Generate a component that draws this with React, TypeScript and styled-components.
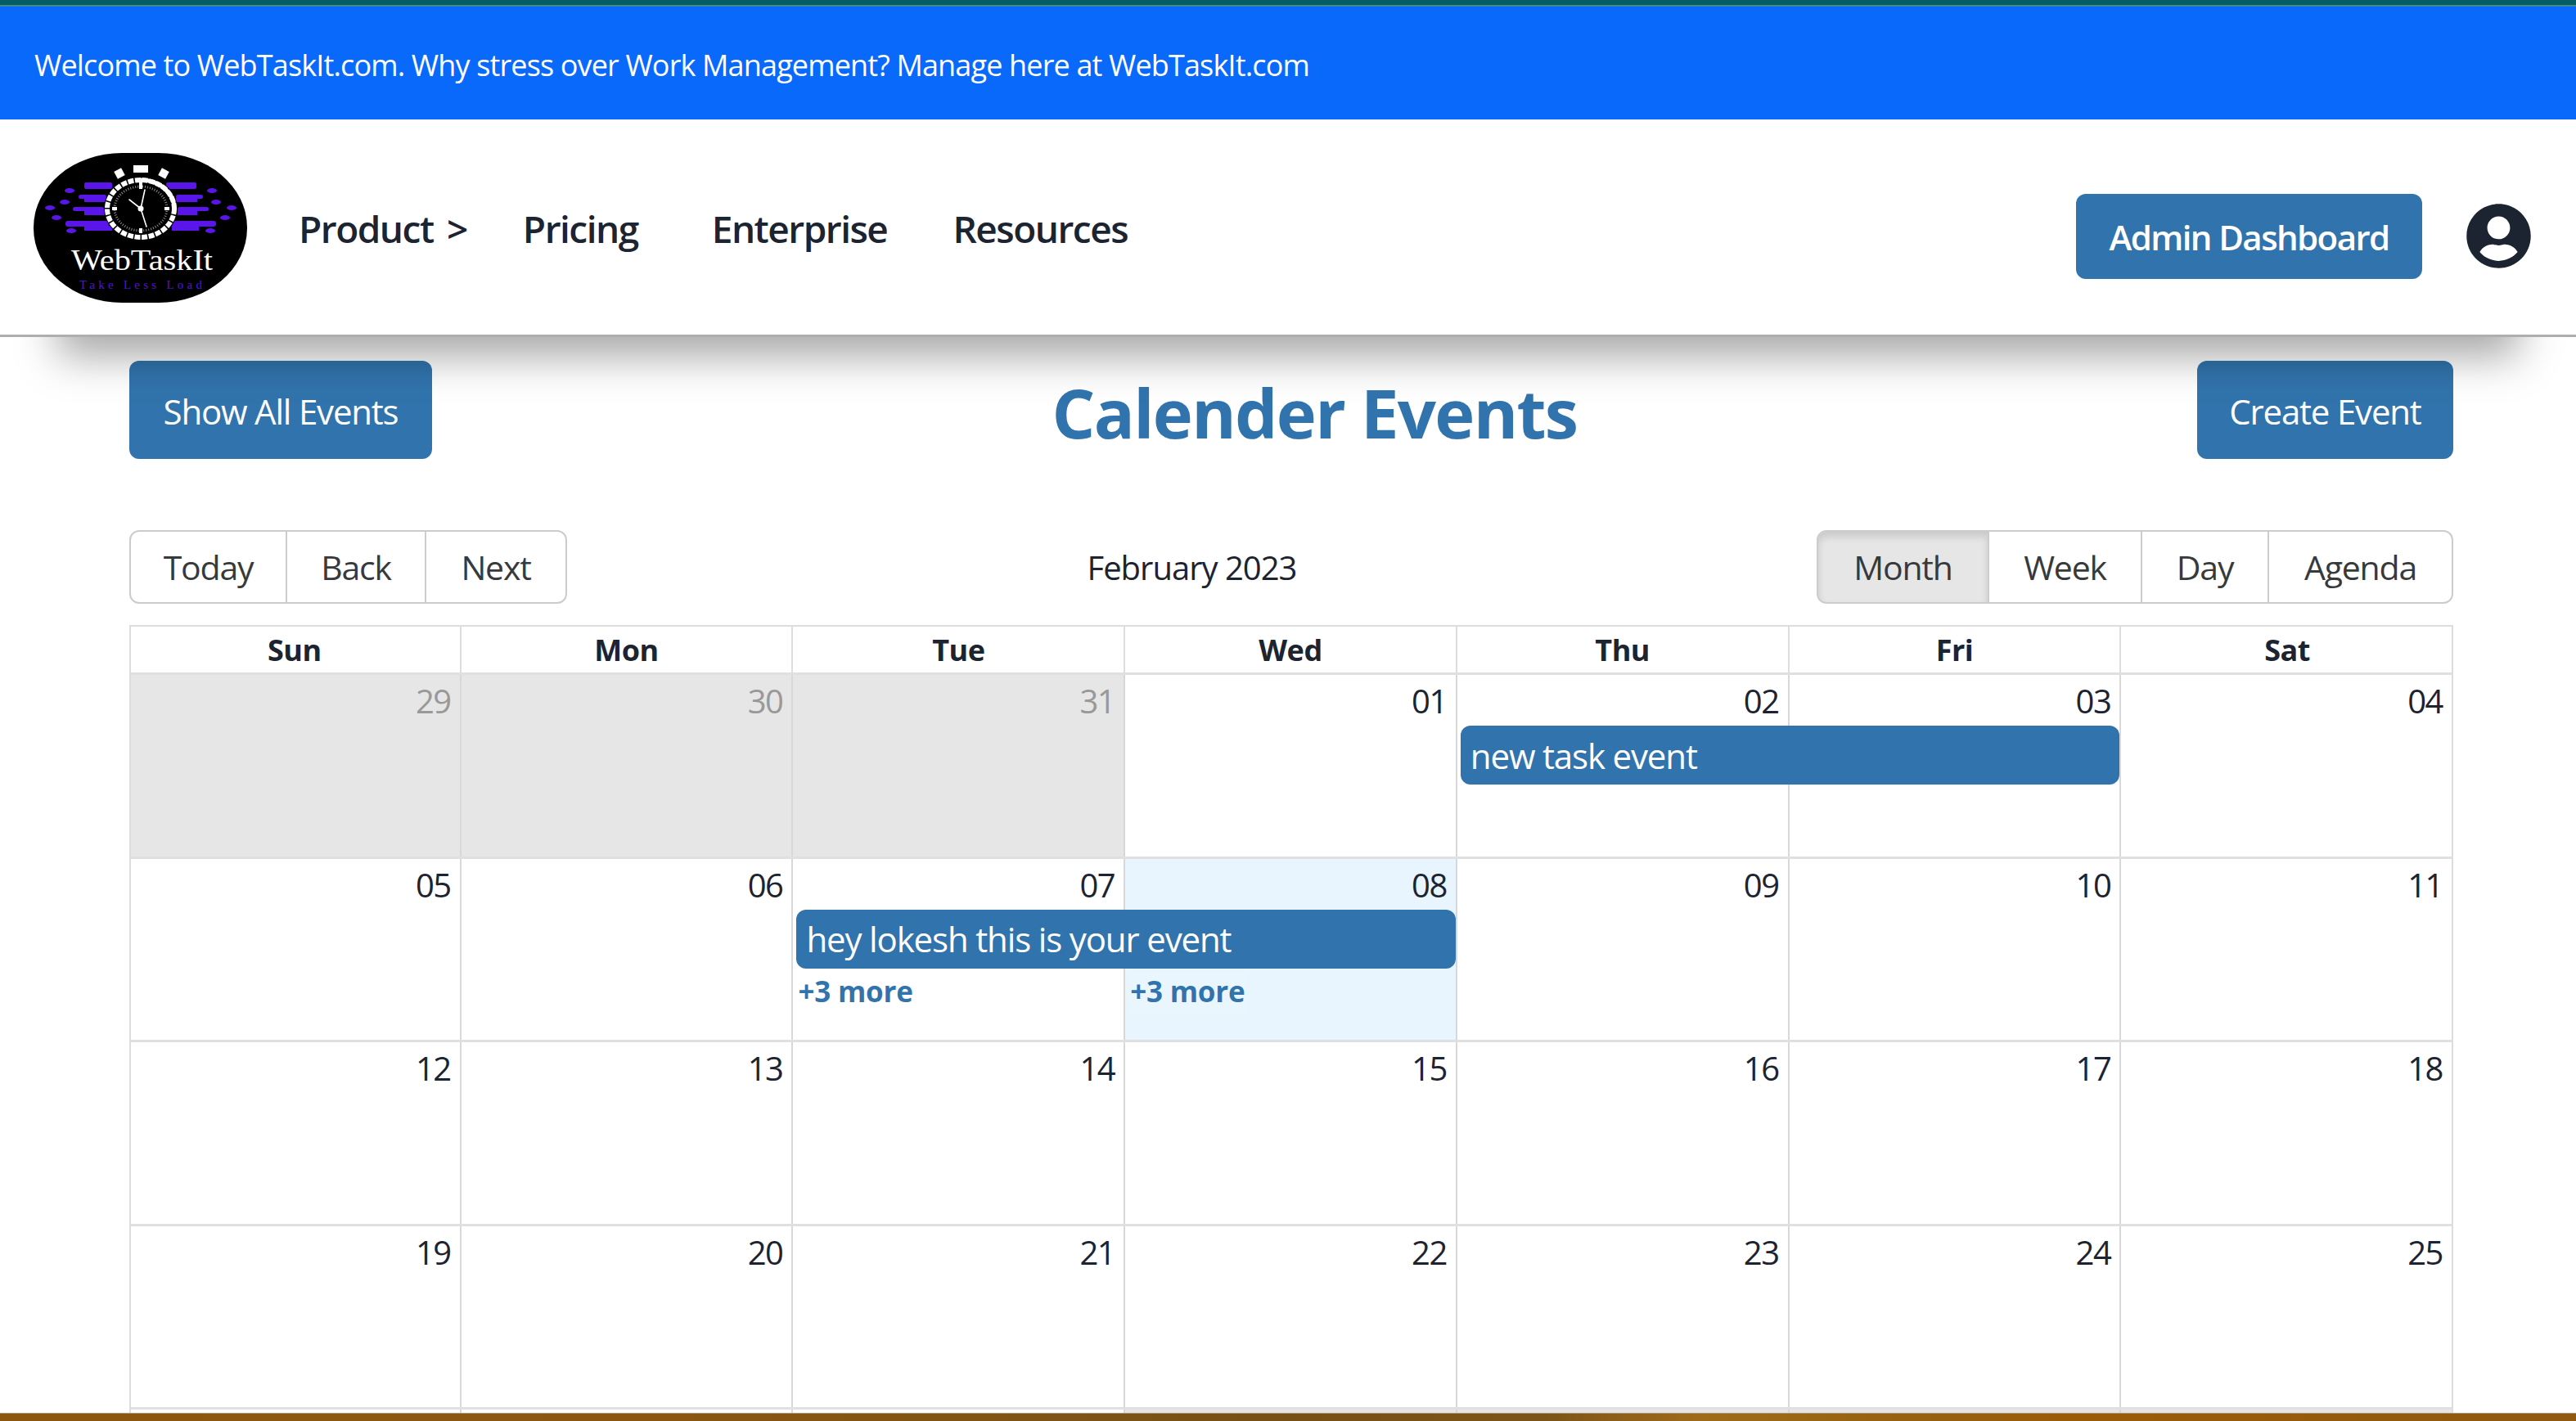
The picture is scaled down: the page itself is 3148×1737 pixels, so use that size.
import React from 'react';
import { FaUserCircle } from 'react-icons/fa';
import styled, { createGlobalStyle } from 'styled-components';

const GlobalStyle = createGlobalStyle`
  html, body { margin: 0; padding: 0; background: #fff; }
  body { font-family: "Open Sans", "Noto Sans", sans-serif; color: #1c2331; height: 1737px; overflow: hidden; }
  * { box-sizing: border-box; }
`;

const Page = styled.div`
  position: relative;
  height: 1737px;
  overflow: hidden;
`;

const TopBar = styled.header`
  position: relative;
  z-index: 2;
  background: #fff;
  box-shadow: 0 94px 48px -70px rgba(0, 0, 0, 0.34);
`;

const BrowserStrip = styled.div`
  height: 8px;
  background: #055e63;
  border-bottom: 2px solid #3f8a8e;
`;

const Banner = styled.div`
  height: 138px;
  display: flex;
  align-items: center;
  padding: 4px 0 0 42px;
  background: #0969fb;
  color: #fff;
  font-size: 36px;
  letter-spacing: -0.85px;
`;

const Nav = styled.nav`
  height: 266px;
  display: flex;
  align-items: center;
  padding: 2px 54px 0 41px;
  background: #fff;
  border-bottom: 3px solid #aeaeb0;
`;

const Links = styled.div`
  display: flex;
  align-items: center;
  margin-left: 63px;
  flex: 1;
`;

const NavLink = styled.a<{ $gap: number }>`
  margin-right: ${(p) => p.$gap}px;
  font-size: 46px;
  font-weight: 600;
  letter-spacing: -1.5px;
  word-spacing: 6px;
  color: #1c2331;
`;

const NavActions = styled.div`
  display: flex;
  align-items: center;
  padding-top: 20px;
`;

const PrimaryButton = styled.button<{ $strong?: boolean; $w: number; $h: number }>`
  width: ${(p) => p.$w}px;
  height: ${(p) => p.$h}px;
  padding: 2px 0 0;
  border: 0;
  border-radius: 12px;
  background: #3174ad;
  color: #fff;
  font-family: inherit;
  font-size: 42px;
  font-weight: ${(p) => (p.$strong ? 600 : 400)};
  letter-spacing: ${(p) => (p.$strong ? -1.6 : -1.2)}px;
`;

const Avatar = styled.div`
  display: flex;
  margin-left: 53px;
  color: #1c2331;
`;

const Main = styled.main`
  padding: 29px 150px 0 158px;
`;

const TitleRow = styled.div`
  display: flex;
  align-items: center;
  justify-content: space-between;
  height: 120px;
`;

const Title = styled.h1`
  margin: 0;
  padding-top: 4px;
  color: #3174ad;
  font-size: 83px;
  font-weight: 700;
  letter-spacing: -1.7px;
`;

const Toolbar = styled.div`
  display: flex;
  align-items: center;
  height: 90px;
  margin-top: 87px;
`;

const ToolbarLabel = styled.div`
  flex: 1;
  text-align: center;
  font-size: 40px;
  letter-spacing: -1px;
  color: #1c2331;
`;

const ButtonGroup = styled.div`
  display: flex;
  height: 90px;
`;

const ToolButton = styled.button<{ $w: number; $active?: boolean }>`
  width: ${(p) => p.$w}px;
  height: 100%;
  margin-left: -2px;
  padding: 0;
  border: 2px solid #ccc;
  background: ${(p) => (p.$active ? '#e6e6e6' : '#fff')};
  box-shadow: ${(p) => (p.$active ? 'inset 0 6px 10px rgba(0,0,0,.125)' : 'none')};
  color: #373a3c;
  font-family: inherit;
  font-size: 41px;
  letter-spacing: -1.2px;

  &:first-child { margin-left: 0; border-radius: 12px 0 0 12px; }
  &:last-child { border-radius: 0 12px 12px 0; }
`;

const Calendar = styled.div`
  margin-top: 26px;
  padding-top: 2px;
  outline: 2px solid #ddd;
  outline-offset: -2px;
`;

const HeaderRow = styled.div`
  display: grid;
  grid-template-columns: repeat(7, 1fr);
  height: 56px;
`;

const HeaderCell = styled.div`
  display: flex;
  align-items: center;
  justify-content: center;
  border-right: 2px solid #ddd;
  font-size: 36px;
  font-weight: 700;
  letter-spacing: -0.5px;
  color: #1c2331;

  &:last-child { border-right: 0; }
`;

const WeekRow = styled.div`
  display: grid;
  grid-template-columns: repeat(7, 1fr);
  grid-template-rows: 60px 76px 1fr;
  height: 224.6px;
  border-top: 3px solid #e0e0e0;
`;

const DayBg = styled.div<{ $col: number; $off?: boolean; $today?: boolean }>`
  grid-column: ${(p) => p.$col};
  grid-row: 1 / -1;
  background: ${(p) => (p.$off ? '#e6e6e6' : p.$today ? '#e8f5fe' : 'transparent')};
  border-right: ${(p) => (p.$col === 7 ? 0 : '2px solid #d8d8d8')};
`;

const DateCell = styled.div<{ $col: number; $off?: boolean }>`
  grid-column: ${(p) => p.$col};
  grid-row: 1;
  padding: 6px 13px 0 0;
  text-align: right;
  font-size: 40px;
  line-height: 52px;
  letter-spacing: -1.5px;
  color: ${(p) => (p.$off ? '#999' : '#1c2331')};
  z-index: 1;
`;

const EventBar = styled.div<{ $col: number; $span: number }>`
  grid-column: ${(p) => p.$col} / span ${(p) => p.$span};
  grid-row: 2;
  align-self: start;
  height: 72px;
  margin: 2px 2px 0 4px;
  padding-left: 12px;
  display: flex;
  align-items: center;
  border-radius: 12px;
  background: #3174ad;
  color: #fff;
  font-size: 42px;
  letter-spacing: -1.15px;
  z-index: 1;
`;

const MoreLink = styled.a<{ $col: number }>`
  grid-column: ${(p) => p.$col};
  grid-row: 3;
  justify-self: start;
  align-self: start;
  margin-left: 4px;
  padding: 2px 2px 6px;
  background: rgba(255, 255, 255, 0.12);
  color: #3174ad;
  font-size: 35px;
  font-weight: 700;
  letter-spacing: -0.2px;
  z-index: 1;
`;

const BottomBar = styled.div`
  position: absolute;
  left: 0;
  right: 0;
  bottom: 0;
  height: 10px;
  z-index: 3;
  border-top: 1px solid #a99a7c;
  background: linear-gradient(90deg, #8d560f 0%, #8b5710 25%, #775016 50%, #7d5417 60%, #a06b19 66%, #96600f 75%, #9b5c07 80%, #90590f 100%);
`;

const dayNames = ['Sun', 'Mon', 'Tue', 'Wed', 'Thu', 'Fri', 'Sat'];

type Day = { label: string; off?: boolean; today?: boolean };
type Week = { days: Day[]; event?: { col: number; span: number; title: string }; more?: number[] };

const nums = (list: string[]) => list.map((label) => ({ label }));

const weeks: Week[] = [
  {
    days: [
      { label: '29', off: true },
      { label: '30', off: true },
      { label: '31', off: true },
      ...nums(['01', '02', '03', '04']),
    ],
    event: { col: 5, span: 2, title: 'new task event' },
  },
  {
    days: [...nums(['05', '06', '07']), { label: '08', today: true }, ...nums(['09', '10', '11'])],
    event: { col: 3, span: 2, title: 'hey lokesh this is your event' },
    more: [3, 4],
  },
  { days: nums(['12', '13', '14', '15', '16', '17', '18']) },
  { days: nums(['19', '20', '21', '22', '23', '24', '25']) },
  // next week sits under the bottom bar, its dates don't show
  {
    days: [
      ...nums(['', '', '']),
      { label: '', off: true },
      { label: '', off: true },
      { label: '', off: true },
      { label: '', off: true },
    ],
  },
];

const Logo = () => (
  <svg width="261" height="183" viewBox="0 0 261 183">
    <rect width="261" height="183" rx="108" ry="91" fill="#000" />
    <g fill="#5a16ea">
      <rect x="62" y="36" width="34" height="8" rx="2" />
      <rect x="55" y="51" width="34" height="5" rx="2.5" />
      <rect x="62" y="55" width="27" height="5" />
      <rect x="48" y="66" width="38" height="5" rx="2.5" />
      <rect x="62" y="70" width="26" height="6" />
      <rect x="39" y="83" width="53" height="7" rx="3" />
      <rect x="62" y="89" width="34" height="6" />
      <rect x="162" y="36" width="37" height="8" rx="2" />
      <rect x="174" y="51" width="33" height="5" rx="2.5" />
      <rect x="174" y="55" width="26" height="5" />
      <rect x="176" y="66" width="38" height="5" rx="2.5" />
      <rect x="176" y="70" width="24" height="6" />
      <rect x="169" y="83" width="54" height="7" rx="3" />
      <rect x="169" y="89" width="33" height="6" />
      <ellipse cx="44" cy="46" rx="6" ry="3" />
      <ellipse cx="38" cy="60" rx="6" ry="3" />
      <ellipse cx="20" cy="67" rx="6" ry="3" />
      <ellipse cx="28" cy="79" rx="6" ry="3" />
      <ellipse cx="46" cy="95" rx="6" ry="3" />
      <ellipse cx="218" cy="46" rx="6" ry="3" />
      <ellipse cx="223" cy="60" rx="6" ry="3" />
      <ellipse cx="242" cy="67" rx="6" ry="3" />
      <ellipse cx="234" cy="79" rx="6" ry="3" />
      <ellipse cx="216" cy="95" rx="6" ry="3" />
    </g>
    <ellipse cx="131" cy="68" rx="45" ry="39" fill="#000" />
    <ellipse cx="131" cy="68" rx="41" ry="35" fill="none" stroke="#fff" strokeWidth="6" strokeDasharray="7 1.6" />
    <path d="M131 33 A41 35 0 0 1 172 68" fill="none" stroke="#fff" strokeWidth="5" />
    <ellipse cx="131" cy="68" rx="32" ry="27" fill="none" stroke="#888" strokeWidth="3" strokeDasharray="1 2" />
    <g fill="#fff">
      <rect x="122" y="15" width="18" height="9" />
      <rect x="100" y="20" width="10" height="10" transform="rotate(-28 105 25)" />
      <rect x="154" y="20" width="10" height="10" transform="rotate(28 159 25)" />
      <rect x="129" y="35" width="4" height="9" />
      <rect x="129" y="92" width="4" height="6" />
      <rect x="96" y="66" width="6" height="4" />
      <rect x="160" y="66" width="6" height="4" />
      <circle cx="131" cy="68" r="3.5" />
    </g>
    <g stroke="#fff" strokeWidth="1.6" strokeLinecap="round">
      <line x1="131" y1="68" x2="136" y2="45" />
      <line x1="131" y1="68" x2="117" y2="57" />
      <line x1="131" y1="68" x2="138" y2="90" />
    </g>
    <text x="46" y="143" fill="#fff" fontFamily='"Liberation Serif", serif' fontSize="36" textLength="173" lengthAdjust="spacingAndGlyphs">WebTaskIt</text>
    <text x="56" y="166" fill="#5212dc" fontFamily='"Liberation Serif", serif' fontSize="15" textLength="150">Take Less Load</text>
  </svg>
);

export default function App() {
  return (
    <Page>
      <GlobalStyle />
      <TopBar>
        <BrowserStrip />
        <Banner>Welcome to WebTaskIt.com. Why stress over Work Management? Manage here at WebTaskIt.com</Banner>
        <Nav>
          <Logo />
          <Links>
            <NavLink $gap={68}>Product &gt;</NavLink>
            <NavLink $gap={90}>Pricing</NavLink>
            <NavLink $gap={80}>Enterprise</NavLink>
            <NavLink $gap={0}>Resources</NavLink>
          </Links>
          <NavActions>
            <PrimaryButton $strong $w={423} $h={104}>Admin Dashboard</PrimaryButton>
            <Avatar><FaUserCircle size={81} /></Avatar>
          </NavActions>
        </Nav>
      </TopBar>
      <Main>
        <TitleRow>
          <PrimaryButton $w={370} $h={120}>Show All Events</PrimaryButton>
          <Title>Calender Events</Title>
          <PrimaryButton $w={313} $h={120}>Create Event</PrimaryButton>
        </TitleRow>
        <Toolbar>
          <ButtonGroup>
            <ToolButton $w={193}>Today</ToolButton>
            <ToolButton $w={172}>Back</ToolButton>
            <ToolButton $w={174}>Next</ToolButton>
          </ButtonGroup>
          <ToolbarLabel>February 2023</ToolbarLabel>
          <ButtonGroup>
            <ToolButton $w={211} $active>Month</ToolButton>
            <ToolButton $w={189}>Week</ToolButton>
            <ToolButton $w={157}>Day</ToolButton>
            <ToolButton $w={227}>Agenda</ToolButton>
          </ButtonGroup>
        </Toolbar>
        <Calendar>
          <HeaderRow>
            {dayNames.map((d) => <HeaderCell key={d}>{d}</HeaderCell>)}
          </HeaderRow>
          {weeks.map((week, i) => (
            <WeekRow key={i}>
              {week.days.map((d, c) => <DayBg key={c} $col={c + 1} $off={d.off} $today={d.today} />)}
              {week.days.map((d, c) => <DateCell key={c} $col={c + 1} $off={d.off}>{d.label}</DateCell>)}
              {week.event && (
                <EventBar $col={week.event.col} $span={week.event.span}>{week.event.title}</EventBar>
              )}
              {week.more?.map((c) => <MoreLink key={c} $col={c}>+3 more</MoreLink>)}
            </WeekRow>
          ))}
        </Calendar>
      </Main>
      <BottomBar />
    </Page>
  );
}
